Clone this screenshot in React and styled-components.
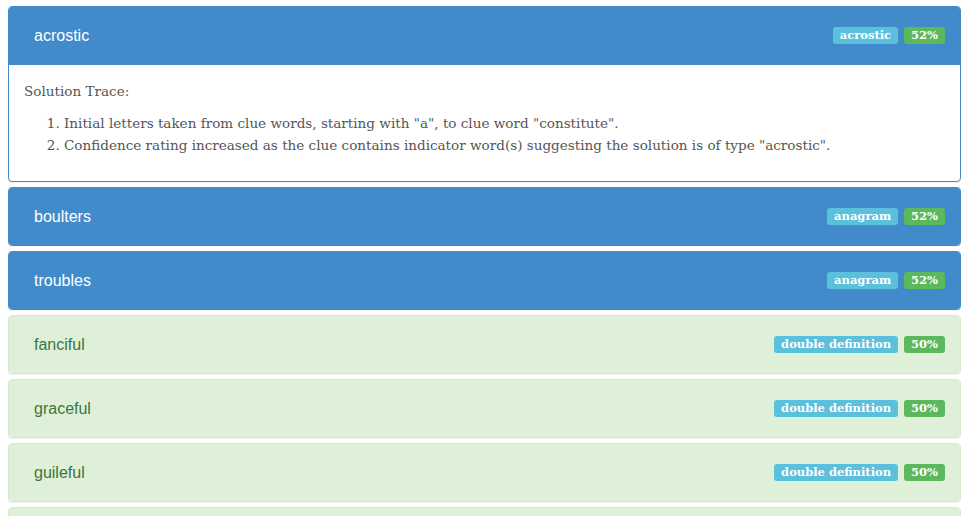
import React from "react";
import styled, { createGlobalStyle, css } from "styled-components";

const GlobalStyle = createGlobalStyle`
  body {
    margin: 6px 8px;
    background: #fff;
    font-family: "DejaVu Serif", Georgia, serif;
    font-size: 13.55px;
    line-height: 22px;
    color: #555;
  }
`;

const variants = {
  primary: css`
    border-color: #428bca;
  `,
  success: css`
    border-color: #d6e9c6;
  `,
};

const headingVariants = {
  primary: css`
    background: #428bca;
    border-color: #428bca;
    color: #fff;
  `,
  success: css`
    background: #dff0d8;
    border-color: #d6e9c6;
    color: #3c763d;
  `,
};

const Panel = styled.div`
  border: 1px solid transparent;
  border-radius: 4px;
  margin-bottom: 5px;
  background: #fff;
  box-shadow: 0 1px 1px rgba(0, 0, 0, 0.05);
  overflow: hidden;
  ${({ $variant }) => variants[$variant]}
`;

const Heading = styled.div`
  display: flex;
  align-items: center;
  justify-content: space-between;
  height: 17px;
  padding: 20px 15px 20px 25px;
  border-bottom: ${({ $open }) => ($open ? "1px solid" : "0")};
  ${({ $variant }) => headingVariants[$variant]}
`;

const Title = styled.h3`
  margin: 0;
  font-family: "Liberation Sans", Arial, sans-serif;
  font-size: 16px;
  font-weight: normal;
  line-height: 17px;
`;

const Labels = styled.div`
  display: flex;
  gap: 6px;
`;

const Label = styled.span`
  display: inline-block;
  font-family: "DejaVu Serif", Georgia, serif;
  font-weight: bold;
  font-size: 11.5px;
  line-height: 12px;
  padding: 2px 7px 3px;
  border-radius: 3px;
  color: #fff;
  background: ${({ $kind }) => ($kind === "score" ? "#5cb85c" : "#5bc0de")};
`;

const Body = styled.div`
  padding: 15px;
`;

const Para = styled.p`
  margin: 0 0 10px;
`;

const Steps = styled.ol`
  margin: 0 0 10px;
  padding-left: 40px;
`;

const solutions = [
  {
    word: "acrostic",
    type: "acrostic",
    score: "52%",
    variant: "primary",
    trace: [
      'Initial letters taken from clue words, starting with "a", to clue word "constitute".',
      'Confidence rating increased as the clue contains indicator word(s) suggesting the solution is of type "acrostic".',
    ],
  },
  { word: "boulters", type: "anagram", score: "52%", variant: "primary" },
  { word: "troubles", type: "anagram", score: "52%", variant: "primary" },
  { word: "fanciful", type: "double definition", score: "50%", variant: "success" },
  { word: "graceful", type: "double definition", score: "50%", variant: "success" },
  { word: "guileful", type: "double definition", score: "50%", variant: "success" },
  { word: "skilful", type: "double definition", score: "50%", variant: "success" },
];

const App = () => (
  <>
    <GlobalStyle />
    {solutions.map((s) => (
      <Panel key={s.word} $variant={s.variant}>
        <Heading $variant={s.variant} $open={!!s.trace}>
          <Title>{s.word}</Title>
          <Labels>
            <Label>{s.type}</Label>
            <Label $kind="score">{s.score}</Label>
          </Labels>
        </Heading>
        {s.trace && (
          <Body>
            <Para>Solution Trace:</Para>
            <Steps>
              {s.trace.map((t) => (
                <li key={t}>{t}</li>
              ))}
            </Steps>
          </Body>
        )}
      </Panel>
    ))}
  </>
);

export default App;
